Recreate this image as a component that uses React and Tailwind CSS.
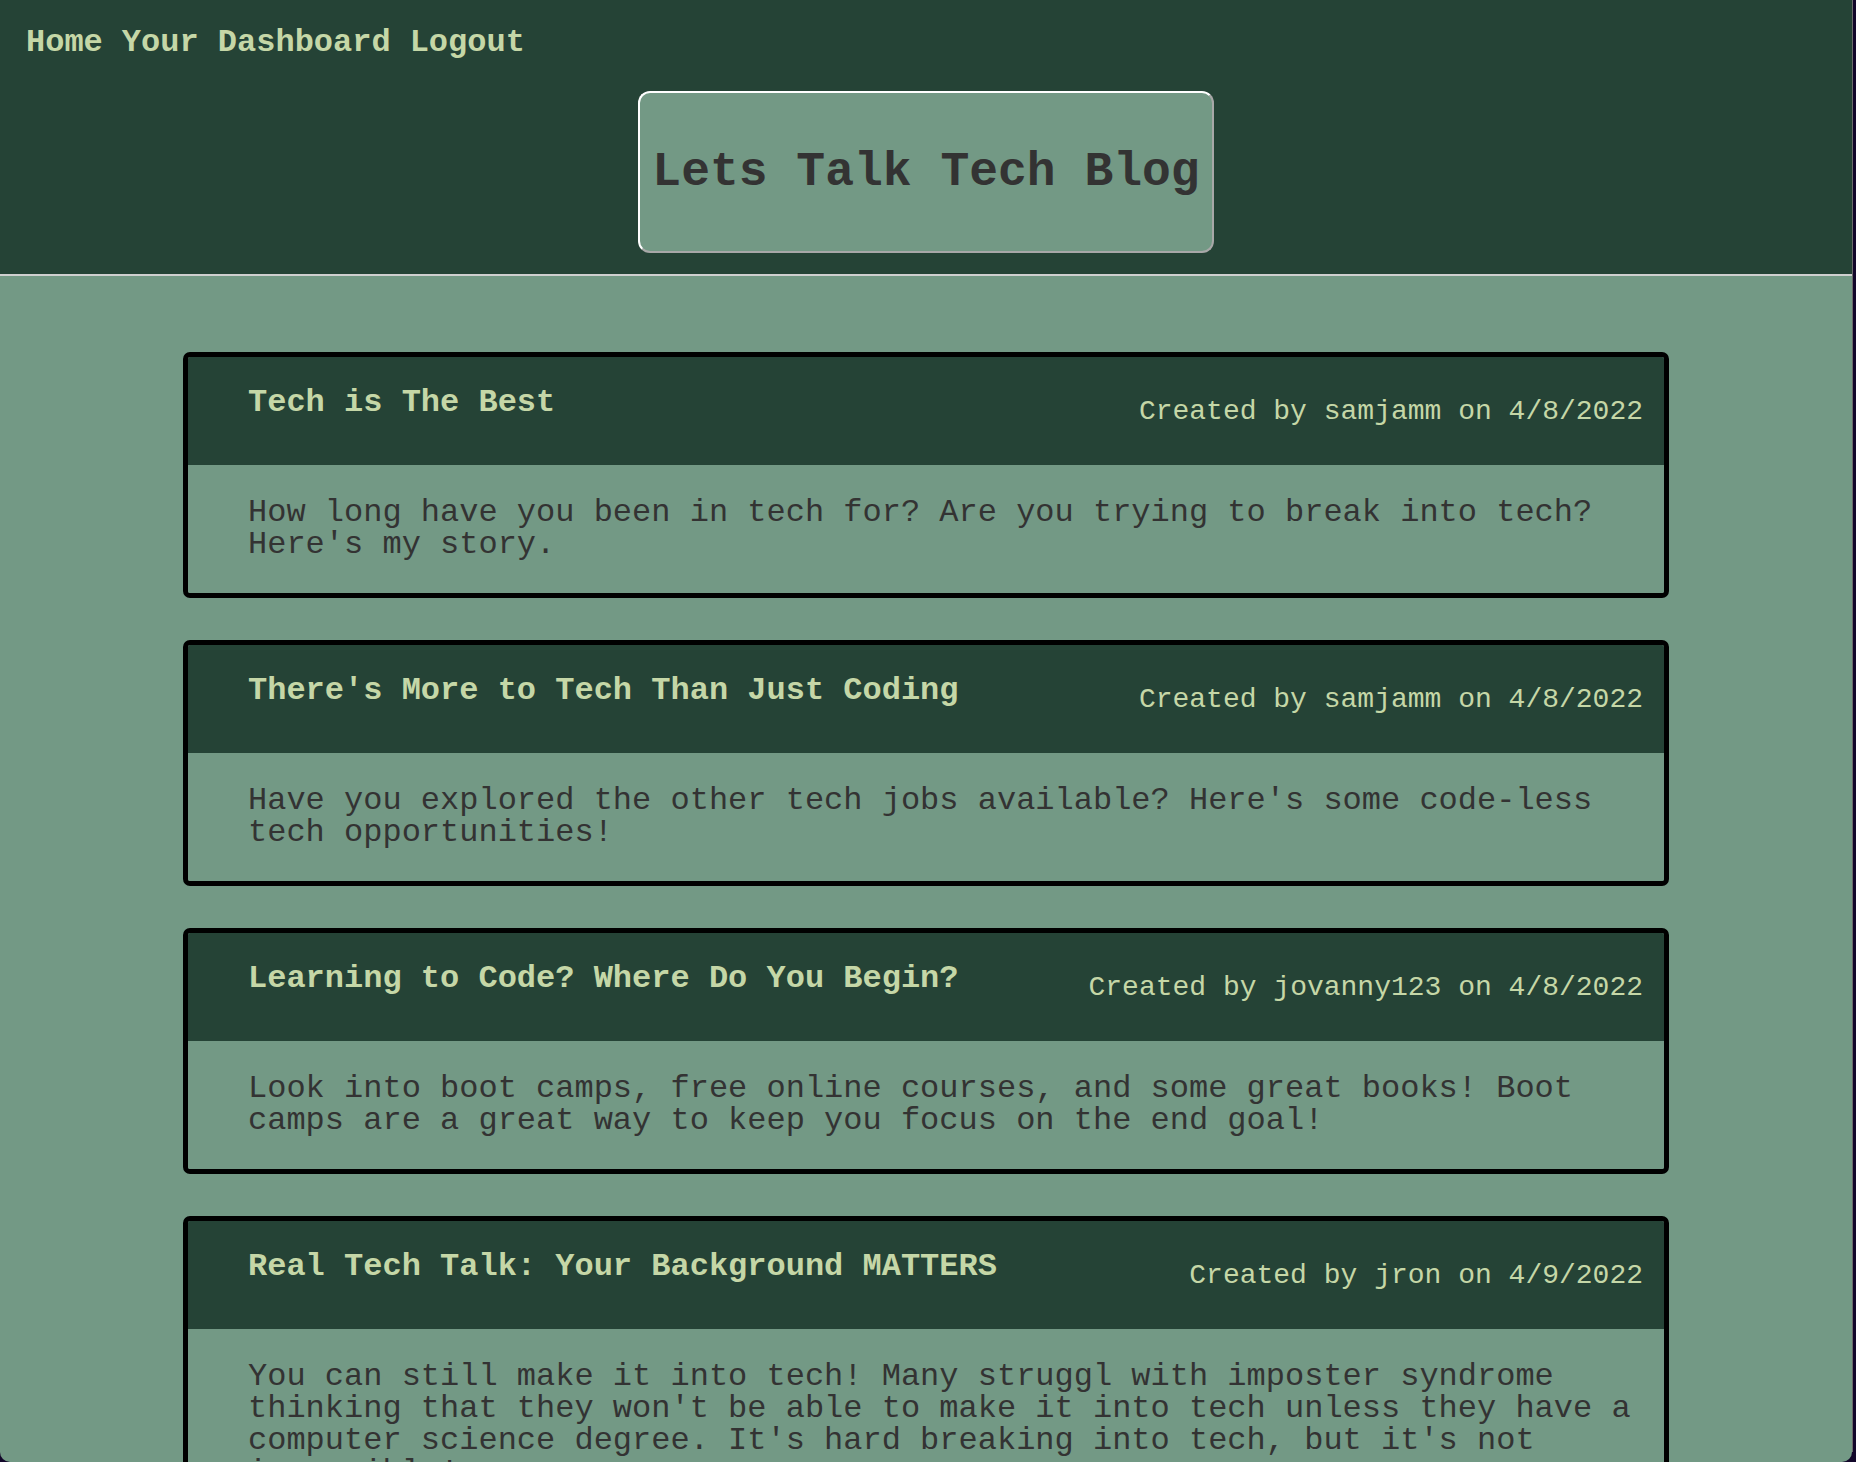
import React from "react";

const posts = [
  {
    title: "Tech is The Best",
    author: "samjamm",
    date: "4/8/2022",
    body: "How long have you been in tech for? Are you trying to break into tech? Here's my story.",
  },
  {
    title: "There's More to Tech Than Just Coding",
    author: "samjamm",
    date: "4/8/2022",
    body: "Have you explored the other tech jobs available? Here's some code-less tech opportunities!",
  },
  {
    title: "Learning to Code? Where Do You Begin?",
    author: "jovanny123",
    date: "4/8/2022",
    body: "Look into boot camps, free online courses, and some great books! Boot camps are a great way to keep you focus on the end goal!",
  },
  {
    title: "Real Tech Talk: Your Background MATTERS",
    author: "jron",
    date: "4/9/2022",
    body: "You can still make it into tech! Many struggl with imposter syndrome thinking that they won't be able to make it into tech unless they have a computer science degree. It's hard breaking into tech, but it's not impossible!",
  },
];

function Card({ post }) {
  return (
    <div className="shrink-0 w-[1486px] mx-auto border-[5px] border-black rounded-[7px] overflow-hidden">
      <div className="bg-[#254336] h-[108px] flex justify-between items-start pl-[60px] pr-[21px]">
        <h2 className="mt-[30px] text-[32px] leading-[32px] font-bold text-[#c5d7a7]">{post.title}</h2>
        <span className="mt-[41px] text-[28px] leading-[28px] text-[#c5d7a7] whitespace-nowrap">
          Created by {post.author} on {post.date}
        </span>
      </div>
      <div className="bg-[#739985] pl-[60px] pr-[20px] pt-[32px] pb-[32px]">
        <p className="text-[32px] leading-[32px] text-[#333333]">{post.body}</p>
      </div>
    </div>
  );
}

export default function App() {
  return (
    <div
      className="w-[1856px] h-[1462px] overflow-hidden bg-[#12072a] flex"
      style={{ fontFamily: '"Liberation Mono", "Courier New", monospace' }}
    >
      <div className="w-[1852px] h-[1462px] shrink-0 bg-[#739985] rounded-b-[10px] overflow-hidden flex flex-col">
        <header className="shrink-0 bg-[#254336] h-[276px] border-b-2 border-[#d0d0d0]">
          <nav className="pl-[26px] pt-[27px] flex gap-[19px] text-[32px] leading-[32px] font-bold text-[#c5d7a7]">
            <a href="#">Home</a>
            <a href="#">Your Dashboard</a>
            <a href="#">Logout</a>
          </nav>
          <div className="mt-[32px] mx-auto w-[576px] h-[162px] rounded-[12px] bg-[#739985] border-2 border-t-white border-l-white border-r-[#a8a8a8] border-b-[#a8a8a8] flex items-center justify-center">
            <h1 className="text-[48px] leading-[48px] font-bold text-[#333333]">Lets Talk Tech Blog</h1>
          </div>
        </header>
        <main className="shrink-0 pt-[76px] flex flex-col gap-[42px]">
          {posts.map((p, i) => (
            <Card key={i} post={p} />
          ))}
        </main>
      </div>
      <div className="w-[1px] h-[1452px] shrink-0 bg-[#6a6a6a]" />
    </div>
  );
}
